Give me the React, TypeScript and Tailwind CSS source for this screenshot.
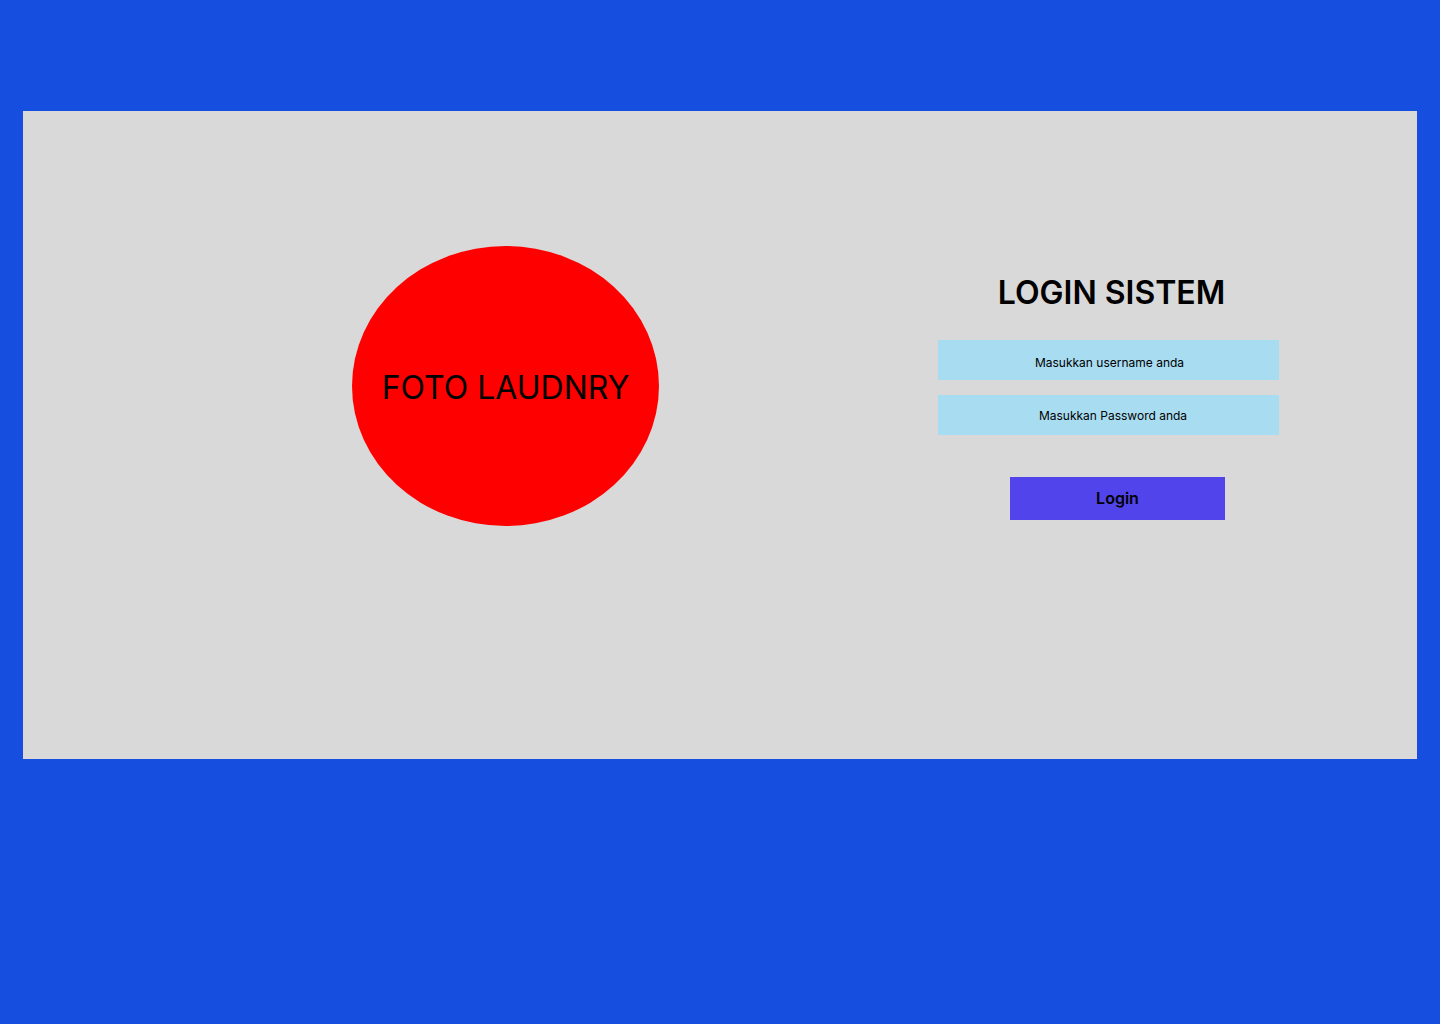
export default function App() {
  return (
    <div className="min-h-[1024px] w-full bg-[#164fe0] pt-[111px] pl-[23px] font-['Inter',sans-serif]">
      <div className="flex h-[648px] w-[1394px] items-start bg-[#d9d9d9]">
        {/* Photo placeholder */}
        <div className="ml-[329px] mt-[135px] flex h-[280px] w-[307px] items-center justify-center rounded-[50%] bg-[#ff0000]">
          <span className="pt-[2px] text-[32px] leading-[39px] text-black">FOTO LAUDNRY</span>
        </div>

        {/* Login form */}
        <div className="ml-[279px] mt-[162px] flex w-[341px] flex-col">
          <h1 className="pl-[6px] text-center text-[32px] font-semibold leading-[39px] text-black">
            LOGIN SISTEM
          </h1>
          <input
            type="text"
            placeholder="Masukkan username anda"
            className="mt-[28px] h-[40px] w-full bg-[#a8dcf1] pl-[2px] pt-[4px] text-center text-[12px] text-black outline-none placeholder:text-black"
          />
          <input
            type="password"
            placeholder="Masukkan Password anda"
            className="mt-[15px] h-[40px] w-full bg-[#a8dcf1] pl-[9px] text-center text-[12px] text-black outline-none placeholder:text-black"
          />
          <button className="ml-[72px] mt-[42px] h-[43px] w-[215px] bg-[#5244eb] pb-[1px] text-[16px] font-semibold text-black">
            Login
          </button>
        </div>
      </div>
    </div>
  );
}
